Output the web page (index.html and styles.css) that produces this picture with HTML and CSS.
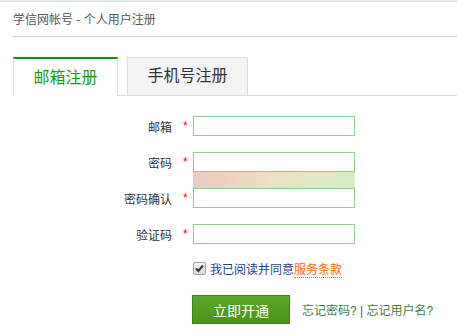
FILE: index.html
```html
<!DOCTYPE html>
<html lang="zh-CN">
<head>
    <meta charset="UTF-8">
    <meta name="viewport" content="width=device-width, initial-scale=1.0">
    <title>学信网帐号 - 个人用户注册</title>
    <link rel="stylesheet" href="styles.css">
</head>
<body>
    <div class="page">
        <div class="header">学信网帐号 - 个人用户注册</div>

        <ul class="tabs">
            <li class="tab active">邮箱注册</li>
            <li class="tab">手机号注册</li>
        </ul>

        <form class="reg-form">
            <div class="field">
                <label class="label">邮箱</label>
                <span class="star">*</span>
                <input class="input" type="text">
            </div>
            <div class="field">
                <label class="label">密码</label>
                <span class="star">*</span>
                <div class="pwd-box">
                    <input class="input" type="password">
                    <div class="strength"></div>
                </div>
            </div>
            <div class="field">
                <label class="label">密码确认</label>
                <span class="star">*</span>
                <input class="input" type="password">
            </div>
            <div class="field">
                <label class="label">验证码</label>
                <span class="star">*</span>
                <input class="input" type="text">
            </div>

            <div class="agree">
                <span class="checkbox">
                    <svg width="11" height="11" viewBox="0 0 11 11"><path d="M2 5.5 L4.3 8 L9 2.5" fill="none" stroke="#333" stroke-width="2"/></svg>
                </span>
                <span class="agree-text">我已阅读并同意<a class="terms" href="#">服务条款</a></span>
            </div>

            <div class="actions">
                <button class="btn" type="button">立即开通</button>
                <span class="links"><a href="#">忘记密码?</a> <span class="sep">|</span> <a href="#">忘记用户名?</a></span>
            </div>
        </form>
    </div>
</body>
</html>
```

FILE: styles.css
```css
body {
    margin: 0;
    font-family: "Liberation Sans", "Noto Sans CJK SC", sans-serif;
    font-size: 12px;
    color: #333;
    background: #fff;
    border-top: 2px solid #e2e7ee;
}

.page {
    padding-left: 13px;
}

.header {
    height: 34px;
    line-height: 36px;
    color: #555;
    border-bottom: 1px solid #b9d8b9;
}

.tabs {
    list-style: none;
    margin: 20px 0 0;
    padding: 0;
    display: flex;
    height: 38px;
    border-bottom: 1px solid #ddd;
}

.tab {
    box-sizing: border-box;
    height: 38px;
    line-height: 36px;
    width: 121px;
    margin-left: 9px;
    text-align: center;
    font-size: 16px;
    background: #f4f4f4;
    border: 1px solid #ddd;
    border-bottom: none;
}

.tab.active {
    width: 105px;
    margin-left: 0;
    height: 39px;
    background: #fff;
    color: #1a9a0a;
    border-top: 2px solid #0a960a;
    line-height: 38px;
}

.reg-form {
    padding-top: 20px;
}

.field {
    display: flex;
    align-items: center;
    height: 20px;
    margin-bottom: 16px;
}

.label {
    width: 159px;
    text-align: right;
}

.star {
    width: 21px;
    padding-left: 11px;
    box-sizing: border-box;
    color: #f00;
}

.input {
    box-sizing: border-box;
    width: 162px;
    height: 20px;
    margin: 0;
    border: 1px solid #8fd08f;
    padding: 0 3px;
    outline: none;
}

.pwd-box {
    position: relative;
}

.strength {
    position: absolute;
    left: 0;
    top: 20px;
    width: 162px;
    height: 16px;
    background: linear-gradient(to right, #eacbc3, #ede0c2 50%, #d3ecc0);
}

.agree {
    display: flex;
    align-items: center;
    margin: 0 0 0 180px;
    padding-top: 0;
    height: 16px;
}

.checkbox {
    box-sizing: border-box;
    width: 13px;
    height: 13px;
    border: 1px solid #a0a0a0;
    border-radius: 2px;
    background: linear-gradient(#f4f4f4, #dcdcdc);
    display: flex;
    align-items: center;
    justify-content: center;
    margin-right: 4px;
}

.agree-text {
    color: #1f3f8f;
}

.terms {
    color: #f60;
    text-decoration: none;
    border-bottom: 1px dotted #f60;
}

.actions {
    display: flex;
    align-items: center;
    margin: 19px 0 0 179px;
}

.btn {
    width: 98px;
    height: 29px;
    border: 1px solid #3c8412;
    background: linear-gradient(#5aa82a, #4a9416);
    color: #fff;
    font-family: "Liberation Sans", "Noto Sans CJK SC", sans-serif;
    font-size: 14px;
    padding: 0;
    cursor: pointer;
}

.links {
    margin-left: 12px;
}

.links a {
    color: #3e7d3e;
    text-decoration: none;
}

.sep {
    color: #555;
}
```
